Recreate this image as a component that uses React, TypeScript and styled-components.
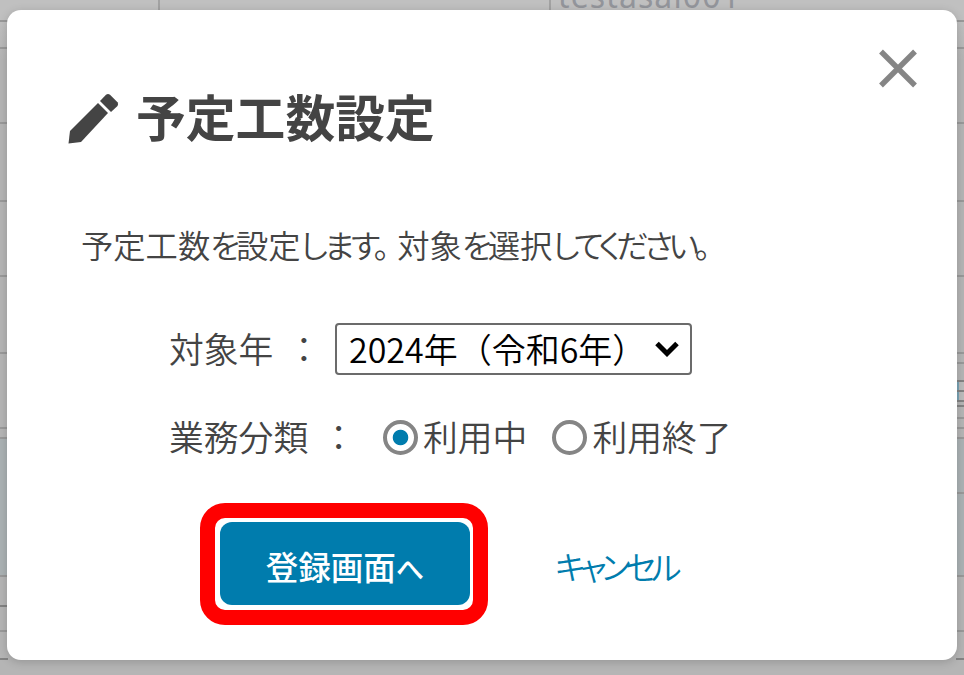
import React, { useState } from "react";
import styled, { createGlobalStyle } from "styled-components";

const GlobalStyle = createGlobalStyle`
  * {
    box-sizing: border-box;
  }
  body {
    margin: 0;
    overflow: hidden;
    background: #b5b5b5;
    color: #444444;
    font-family: "Noto Sans CJK JP", "Noto Sans", sans-serif;
  }
`;

const Page = styled.div`
  height: 675px;
  display: flex;
  flex-direction: column;
  background: linear-gradient(#c0c0c0 0px, #c0c0c0 21px, #b5b5b5 60px);
`;

const TopRow = styled.div`
  display: grid;
  grid-template-columns: 160px 391px 1fr;
  height: 10px;
  flex: none;
`;

const TopCell = styled.div`
  display: flex;
  align-items: flex-end;
  height: 10px;
  padding-left: 7px;
  border-right: 2px solid #a2a2a2;
  color: #93959b;
  font-family: "Noto Sans", sans-serif;
  font-size: 32px;
  letter-spacing: 1.1px;
  line-height: 28px;
  white-space: nowrap;

  &:last-child {
    border-right: none;
  }
`;

const Gutters = styled.div`
  display: flex;
  flex: 1;
  justify-content: space-between;
`;

const Gutter = styled.div`
  width: 8px;
`;

const Line = styled.div<{ $height: number; $tint?: string; $dark?: boolean }>`
  height: ${(p) => p.$height}px;
  background: ${(p) => p.$tint || "transparent"};
  border-bottom: 2px solid ${(p) => (p.$dark ? "#838383" : "#999999")};
`;

const Modal = styled.section`
  position: absolute;
  top: 10px;
  left: 7px;
  width: 950px;
  height: 650px;
  padding: 38px 39px 0 61px;
  border-radius: 14px;
  background: #ffffff;
  box-shadow: 0 2px 10px rgba(0, 0, 0, 0.18);
`;

const Header = styled.header`
  display: flex;
  justify-content: space-between;
  height: 160px;
`;

const Title = styled.h1`
  display: flex;
  align-items: center;
  gap: 17px;
  height: 72px;
  margin: 31px 0 0;
  font-size: 49.8px;
  font-weight: 700;
  line-height: 72px;

  svg {
    margin-top: 6px;
  }
`;

const CloseButton = styled.button`
  width: 40px;
  height: 40px;
  padding: 0;
  border: none;
  background: none;
  cursor: pointer;

  svg {
    display: block;
  }
`;

const Message = styled.p`
  height: 50px;
  margin: 11px 0 0 13px;
  font-size: 32.3px;
  line-height: 50px;
  font-weight: 350;
  white-space: nowrap;
`;

const Kana = styled.span<{ $tight?: number }>`
  font-feature-settings: "palt";
  letter-spacing: ${(p) => p.$tight || 0}px;
`;

const Sentence = styled.span`
  margin-right: 11px;
`;

const Field = styled.div<{ $top: number }>`
  display: flex;
  align-items: center;
  height: 52px;
  margin: ${(p) => p.$top}px 0 0 101px;
  font-size: 34.8px;
  line-height: 52px;
  font-weight: 350;
  white-space: nowrap;
`;

const Label = styled.div<{ $width: number }>`
  display: flex;
  gap: 13px;
  width: ${(p) => p.$width}px;
  padding-bottom: 3px;
`;

const Select = styled.button`
  display: flex;
  align-items: center;
  justify-content: space-between;
  width: 357px;
  height: 52px;
  padding: 0 11px 0 12px;
  border: 2px solid #6b6b6b;
  border-radius: 4px;
  background: #ffffff;
  color: #000000;
  font: inherit;
  font-size: 34px;
  line-height: 48px;
  font-weight: 350;
`;

const Option = styled.label`
  display: flex;
  align-items: center;
  gap: 5px;
  margin-right: 25px;

  span {
    padding-bottom: 3px;
  }
`;

const Radio = styled.input`
  appearance: none;
  width: 35px;
  height: 35px;
  margin: 0;
  border: 4px solid #858585;
  border-radius: 50%;
  background: #ffffff;

  &:checked {
    background: radial-gradient(circle, #007cad 7.3px, #ffffff 8.2px);
  }
`;

const Actions = styled.div`
  display: flex;
  align-items: center;
  margin: 40px 0 0 132px;
`;

const Highlight = styled.div`
  width: 288px;
  height: 122px;
  padding: 4px 3px 4px 5px;
  border: 15px solid #ff0000;
  border-radius: 25px;
`;

const SubmitButton = styled.button`
  display: block;
  width: 250px;
  height: 83px;
  padding: 3px 0 0;
  border: none;
  border-radius: 12px;
  background: #007cad;
  color: #ffffff;
  font: inherit;
  font-size: 32.6px;
  font-weight: 500;
  white-space: nowrap;

  ${Kana} {
    font-size: 28px;
  }
`;

const CancelButton = styled.button`
  margin: 2px 0 0 67px;
  padding: 0;
  border: none;
  background: none;
  color: #007cad;
  font: inherit;
  font-size: 32.5px;
  font-weight: 350;
`;

const leftLines = [12, 27, 75, 78, 75, 77, 75, 10];
const rightLines = [12, 27, 75, 78, 75, 77, 10];

const BLUE_EDGE = "linear-gradient(90deg, #7aa3b4 3px, #bcbcbc 3px)";

const PencilIcon = () => (
  <svg width="51" height="51" viewBox="0 0 51 51" fill="#444444">
    <path d="M0.5 50.5 2 38 30 10 40 20 13 49Z" />
    <path d="M32 8 38 1.8Q40 0 42 1.8L49.5 9.3Q51 11.5 49.5 13L43 19Z" />
  </svg>
);

const CloseIcon = () => (
  <svg width="40" height="40" viewBox="0 0 40 40" stroke="#858585" strokeWidth="5.4">
    <path d="M3 3.5 37 37.5M37 3.5 3 37.5" />
  </svg>
);

const ArrowIcon = () => (
  <svg width="24" height="16" viewBox="0 0 24 16" fill="none" stroke="#000000" strokeWidth="5">
    <path d="M2 2.5 12 12.5 22 2.5" />
  </svg>
);

export default function App() {
  const [status, setStatus] = useState("active");

  return (
    <>
      <GlobalStyle />
      <Page>
        <TopRow>
          <TopCell />
          <TopCell />
          <TopCell>testasai001</TopCell>
        </TopRow>
        <Gutters>
          <Gutter>
            {leftLines.map((height, i) => (
              <Line key={i} $height={height} />
            ))}
            <Line $height={138} $tint="#abb2b4" />
            <Line $height={30} $dark />
            <Line $height={25} />
            <Line $height={28} $dark />
          </Gutter>
          <Gutter>
            {rightLines.map((height, i) => (
              <Line key={i} $height={height} />
            ))}
            <Line $height={18} $dark />
            <Line $height={10} $tint={BLUE_EDGE} $dark />
            <Line $height={10} $tint={BLUE_EDGE} $dark />
            <Line $height={5} $dark />
            <Line $height={12} />
            <Line $height={10} />
            <Line $height={10} />
            <Line $height={55} $tint="#abb2b4" />
            <Line $height={83} $tint="#abb2b4" />
            <Line $height={55} />
            <Line $height={28} $dark />
          </Gutter>
        </Gutters>
      </Page>

      <Modal role="dialog">
        <Header>
          <Title>
            <PencilIcon />
            予定工数設定
          </Title>
          <CloseButton aria-label="閉じる">
            <CloseIcon />
          </CloseButton>
        </Header>
        <Message>
          <Sentence>
            予定工数<Kana $tight={-4}>を</Kana>設定<Kana $tight={-3.4}>します。</Kana>
          </Sentence>
          対象<Kana $tight={-4}>を</Kana>選択<Kana $tight={-4.5}>してください。</Kana>
        </Message>

        <Field $top={54}>
          <Label $width={166}>
            <span>対象年</span>
            <span>：</span>
          </Label>
          <Select>
            2024年（令和6年）
            <ArrowIcon />
          </Select>
        </Field>
        <Field $top={36}>
          <Label $width={214}>
            <span>業務分類</span>
            <span>：</span>
          </Label>
          <Option>
            <Radio type="radio" checked={status === "active"} onChange={() => setStatus("active")} />
            <span>利用中</span>
          </Option>
          <Option>
            <Radio type="radio" checked={status === "ended"} onChange={() => setStatus("ended")} />
            <span>利用終了</span>
          </Option>
        </Field>

        <Actions>
          <Highlight>
            <SubmitButton>
              登録画面<Kana>へ</Kana>
            </SubmitButton>
          </Highlight>
          <CancelButton>
            <Kana $tight={-5.2}>キャンセル</Kana>
          </CancelButton>
        </Actions>
      </Modal>
    </>
  );
}
